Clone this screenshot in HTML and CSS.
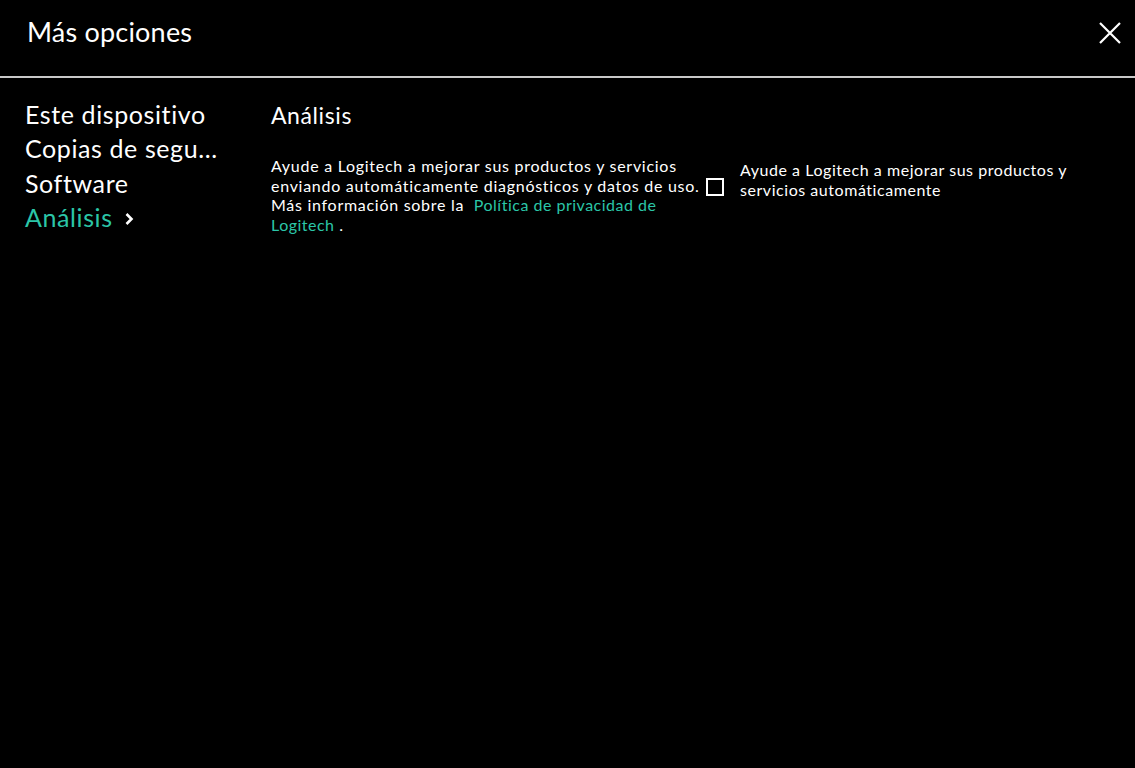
FILE: index.html
```html
<!DOCTYPE html>
<html lang="es">
<head>
    <meta charset="UTF-8">
    <meta name="viewport" content="width=device-width, initial-scale=1.0">
    <title>Más opciones</title>
    <link rel="stylesheet" href="styles.css">
</head>
<body>
    <header class="cabecera">
        <h1 class="titulo">Más opciones</h1>
        <button class="cerrar" aria-label="Cerrar">
            <svg width="24" height="24" viewBox="0 0 24 24">
                <path d="M2 2 L22 22 M22 2 L2 22" stroke="#fff" stroke-width="2.2" fill="none"/>
            </svg>
        </button>
    </header>

    <main class="cuerpo">
        <nav class="menu">
            <a class="menu-item">Este dispositivo</a>
            <a class="menu-item">Copias de segu...</a>
            <a class="menu-item">Software</a>
            <a class="menu-item activo">Análisis
                <svg class="flecha" width="10" height="14" viewBox="0 0 10 14">
                    <path d="M2.5 2 L7.5 7 L2.5 12" stroke="#fff" stroke-width="2.6" fill="none"/>
                </svg>
            </a>
        </nav>

        <section class="contenido">
            <h2 class="seccion">Análisis</h2>
            <div class="fila">
                <p class="texto">Ayude a Logitech a mejorar sus productos y servicios
                    enviando automáticamente diagnósticos y datos de uso.
                    Más información sobre la&nbsp; <a class="enlace">Política de privacidad de Logitech</a>&nbsp;.</p>
                <label class="opcion">
                    <span class="casilla"></span>
                    <span class="etiqueta">Ayude a Logitech a mejorar sus productos y servicios automáticamente</span>
                </label>
            </div>
        </section>
    </main>
</body>
</html>
```

FILE: styles.css
```css
body {
    margin: 0;
    background-color: #000;
    color: #fff;
    font-family: "Lato", "Noto Sans", sans-serif;
    min-height: 100vh;
}

.cabecera {
    display: flex;
    justify-content: space-between;
    align-items: center;
    height: 78px;
    padding: 0 13px 0 27px;
    border-bottom: 2px solid #c8c8c8;
    box-sizing: border-box;
}

.titulo {
    margin: 0 0 14px 0;
    font-size: 27px;
    font-weight: 400;
    letter-spacing: 0.2px;
}

.cerrar {
    background: none;
    border: none;
    padding: 0;
    margin-bottom: 10px;
    cursor: pointer;
    display: flex;
}

.cuerpo {
    display: flex;
    padding: 19px 0 0 25px;
}

.menu {
    display: flex;
    flex-direction: column;
    width: 246px;
}

.menu-item {
    font-size: 25px;
    line-height: 34.3px;
    letter-spacing: 0.6px;
    color: #fff;
    display: flex;
    align-items: center;
}

.menu-item.activo {
    color: #2bc6a8;
}

.flecha {
    margin-left: 11px;
    margin-top: 3px;
}

.contenido {
    display: flex;
    flex-direction: column;
}

.seccion {
    margin: 2px 0 0 0;
    font-size: 23px;
    font-weight: 400;
    letter-spacing: 0.6px;
    line-height: 32px;
}

.fila {
    display: flex;
    align-items: flex-start;
    margin-top: 25px;
}

.texto {
    margin: 0;
    width: 436px;
    font-size: 16px;
    line-height: 19.5px;
    letter-spacing: 0.72px;
}

.enlace {
    color: #2bc6a8;
    letter-spacing: 0.5px;
}

.opcion {
    display: flex;
    align-items: flex-start;
    margin-top: 4px;
}

.casilla {
    width: 14px;
    height: 14px;
    border: 2px solid #fff;
    margin: 18px 16px 0 -1px;
    flex-shrink: 0;
}

.etiqueta {
    width: 350px;
    font-size: 16px;
    line-height: 20px;
    letter-spacing: 0.55px;
}
```
